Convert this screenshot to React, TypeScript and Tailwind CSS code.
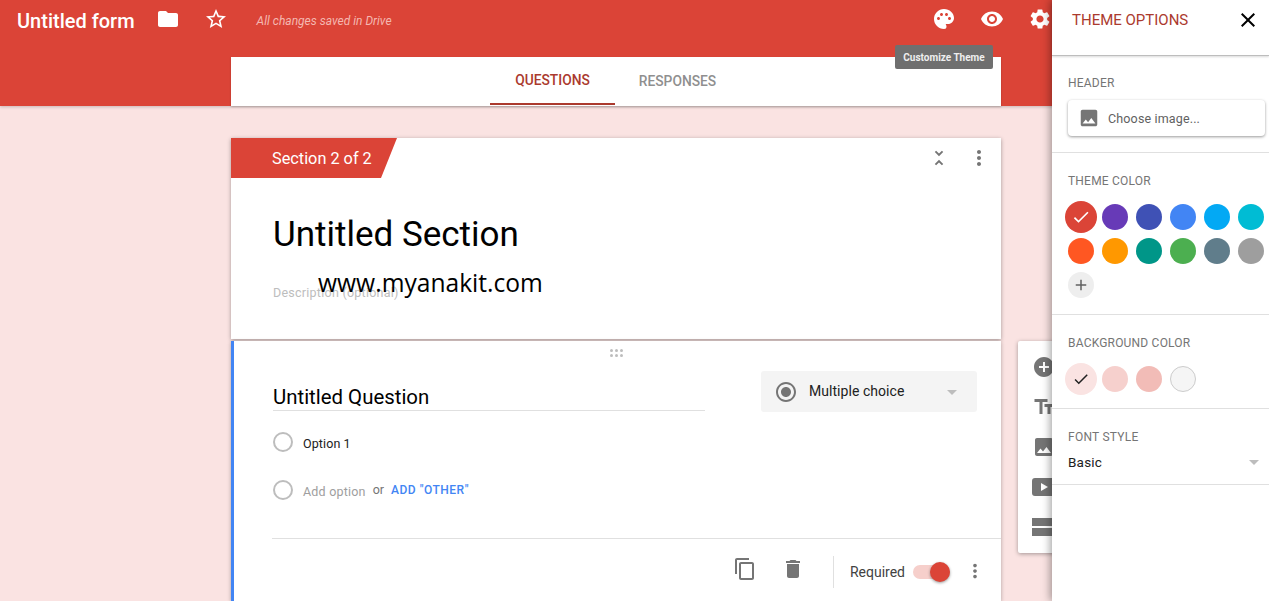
import {
  MdAdd,
  MdAddCircle,
  MdArrowDropDown,
  MdCheck,
  MdClose,
  MdContentCopy,
  MdDelete,
  MdFolder,
  MdImage,
  MdMoreVert,
  MdPalette,
  MdRadioButtonChecked,
  MdSettings,
  MdStarBorder,
  MdTextFields,
  MdUnfoldLess,
  MdVisibility,
} from "react-icons/md";

const themeColors = [
  "bg-[#db4437]",
  "bg-[#673ab7]",
  "bg-[#3f51b5]",
  "bg-[#4285f4]",
  "bg-[#03a9f4]",
  "bg-[#00bcd4]",
  "bg-[#ff5722]",
  "bg-[#ff9800]",
  "bg-[#009688]",
  "bg-[#4caf50]",
  "bg-[#607d8b]",
  "bg-[#9e9e9e]",
];

function ThemeOptions() {
  return (
    <aside className="absolute right-0 top-0 z-20 flex h-[601px] w-[217px] flex-col bg-white shadow-[-2px_0_8px_rgba(0,0,0,0.35)]">
      <div className="flex h-[56px] shrink-0 items-start justify-between border-b border-[#bdbdbd] pl-[20px] pr-[9px] pt-[10px] shadow-[0_1px_2px_rgba(0,0,0,0.15)]">
        <span className="text-[15px] leading-[20px] text-[#ab3a2e]">THEME OPTIONS</span>
        <MdClose className="mt-[-2px] text-[24px] text-black" />
      </div>

      <div className="h-[97px] shrink-0 border-b border-[#e0e0e0] px-[16px] pt-[19px]">
        <div className="text-[12px] leading-[16px] tracking-[0.2px] text-[#757575]">HEADER</div>
        <div className="mt-[9px] flex h-[36px] w-[197px] items-center gap-[8px] rounded-[4px] bg-white pl-[10px] shadow-[0_1px_3px_rgba(0,0,0,0.4)]">
          <MdImage className="text-[22px] text-[#757575]" />
          <span className="mt-[3px] text-[12.5px] tracking-[0.15px] text-[#616161]">Choose image...</span>
        </div>
      </div>

      <div className="h-[162px] shrink-0 border-b border-[#e0e0e0] pl-[16px] pt-[20px]">
        <div className="text-[12px] leading-[16px] tracking-[0.2px] text-[#757575]">THEME COLOR</div>
        <div className="mt-[15px] grid w-[196px] grid-cols-6 gap-x-[8px] gap-y-[8px]">
          {themeColors.map((c, i) => (
            <div key={c} className="relative h-[26px] w-[26px]">
              <div className={`h-[26px] w-[26px] rounded-full ${c}`} />
              {i === 0 && (
                <div className="absolute -left-[3px] -top-[3px] flex h-[32px] w-[32px] items-center justify-center rounded-full bg-[#db4437]">
                  <MdCheck className="text-[20px] text-white" />
                </div>
              )}
            </div>
          ))}
          <div className="flex h-[26px] w-[26px] items-center justify-center rounded-full bg-[#eeeeee]">
            <MdAdd className="text-[18px] text-[#616161]" />
          </div>
        </div>
      </div>

      <div className="h-[94px] shrink-0 border-b border-[#e0e0e0] pl-[16px] pt-[20px]">
        <div className="text-[12px] leading-[16px] tracking-[0.2px] text-[#757575]">BACKGROUND COLOR</div>
        <div className="mt-[15px] flex gap-[8px]">
          <div className="relative h-[26px] w-[26px]">
            <div className="absolute -left-[3px] -top-[3px] flex h-[32px] w-[32px] items-center justify-center rounded-full bg-[#fae3e2]">
              <MdCheck className="text-[18px] text-[#212121]" />
            </div>
          </div>
          <div className="h-[26px] w-[26px] rounded-full bg-[#f6d0cd]" />
          <div className="h-[26px] w-[26px] rounded-full bg-[#f2bcb7]" />
          <div className="h-[26px] w-[26px] rounded-full border border-[#cccccc] bg-[#f5f5f5]" />
        </div>
      </div>

      <div className="h-[76px] shrink-0 border-b border-[#e0e0e0] pl-[16px] pr-[3px] pt-[20px]">
        <div className="text-[12px] leading-[16px] tracking-[0.25px] text-[#757575]">FONT STYLE</div>
        <div className="mt-[5px] flex items-center justify-between">
          <span className="text-[13.5px] leading-[20px] tracking-[0.2px] text-[#212121]">Basic</span>
          <MdArrowDropDown className="text-[24px] text-[#bdbdbd]" />
        </div>
      </div>
    </aside>
  );
}

function Toolbox() {
  return (
    <div className="flex h-[212px] w-[60px] shrink-0 flex-col items-start gap-[16px] rounded-[2px] bg-white pl-[14px] pt-[14px] shadow-[0_1px_4px_rgba(0,0,0,0.35)]">
      <MdAddCircle className="text-[24px] text-[#757575]" />
      <MdTextFields className="text-[24px] text-[#757575]" />
      <MdImage className="text-[24px] text-[#757575]" />
      <svg width="24" height="24" viewBox="0 0 24 24" className="text-[#757575]">
        <path
          fill="currentColor"
          fillRule="evenodd"
          d="M3 3h18a3 3 0 0 1 3 3v12a3 3 0 0 1-3 3H3a3 3 0 0 1-3-3V6a3 3 0 0 1 3-3zm6 5v8l7-4z"
        />
      </svg>
      <svg width="24" height="24" viewBox="0 0 24 24" className="text-[#757575]">
        <path fill="currentColor" d="M0 3h24v8H0zM0 13h24v8H0z" />
      </svg>
    </div>
  );
}

function QuestionCard() {
  return (
    <div className="h-[260px] w-[770px] shrink-0 border-l-[3px] border-[#4285f4] bg-white shadow-[0_1px_4px_rgba(0,0,0,0.3)]">
      <div className="flex justify-center pr-[2px] pt-[8px]">
        <div className="grid grid-cols-3 gap-[2px]">
          {[0, 1, 2, 3, 4, 5].map((d) => (
            <div key={d} className="h-[3px] w-[3px] rounded-full bg-[#bdbdbd]" />
          ))}
        </div>
      </div>

      <div className="flex items-start pl-[39px] pr-[24px] pt-[14px]">
        <div className="mt-[14px] w-[432px] border-b border-[#e0e0e0] pb-[1px] text-[20.4px] leading-[24px] text-black">
          Untitled Question
        </div>
        <div className="ml-auto flex h-[41px] w-[216px] items-center rounded-[3px] bg-[#f4f4f4] pl-[13px] pr-[13px]">
          <MdRadioButtonChecked className="text-[24px] text-[#757575]" />
          <span className="ml-[11px] text-[14px] tracking-[0.05px] text-[#212121]">Multiple choice</span>
          <MdArrowDropDown className="ml-auto text-[24px] text-[#bdbdbd]" />
        </div>
      </div>

      <div className="mt-[6px] flex h-[48px] items-center pl-[39px]">
        <div className="h-[20px] w-[20px] rounded-full border-2 border-[#bdbdbd]" />
        <span className="ml-[10px] mt-[4px] text-[12.5px] tracking-[0.1px] text-[#212121]">Option 1</span>
      </div>
      <div className="flex h-[47px] items-center pl-[39px]">
        <div className="h-[20px] w-[20px] rounded-full border-2 border-[#bdbdbd]" />
        <span className="ml-[10px] mt-[5px] text-[12.5px] tracking-[0.2px] text-[#9e9e9e]">Add option</span>
        <span className="ml-[7px] mt-[1px] text-[12.5px] text-[#757575]">or</span>
        <span className="ml-[7px] mt-[1px] text-[12px] font-medium tracking-[0.5px] text-[#4285f4]">ADD "OTHER"</span>
      </div>

      <div className="ml-[38px] mt-[25px] flex h-[62px] items-center border-t border-[#e0e0e0] pr-[15px]">
        <MdContentCopy className="ml-auto mt-[-2px] text-[24px] text-[#757575]" />
        <MdDelete className="ml-[24px] mt-[-2px] text-[24px] text-[#757575]" />
        <div className="ml-[28px] mt-[4px] h-[32px] w-px bg-[#e0e0e0]" />
        <span className="ml-[16px] mt-[6px] text-[14px] text-[#424242]">Required</span>
        <div className="relative ml-[8px] mt-[5px] h-[14px] w-[37px] rounded-full bg-[#f6cfcb]">
          <div className="absolute -top-[3px] right-0 h-[20px] w-[20px] rounded-full bg-[#db4437] shadow-[0_1px_3px_rgba(0,0,0,0.4)]" />
        </div>
        <MdMoreVert className="ml-[14px] mt-[2px] text-[22px] text-[#757575]" />
      </div>
    </div>
  );
}

export default function App() {
  return (
    <div className="relative h-[601px] w-[1269px] overflow-hidden bg-[#fae3e2] font-['Roboto',sans-serif]">
      {/* header */}
      <header className="h-[106px] bg-[#db4437] shadow-[0_1px_3px_rgba(0,0,0,0.2)]">
        <div className="flex h-[57px] items-start pl-[17px]">
          <span className="mt-[7px] text-[20px] font-medium leading-[28px] text-white">Untitled form</span>
          <MdFolder className="ml-[21px] mt-[7px] text-[24px] text-white" />
          <MdStarBorder className="ml-[24px] mt-[7px] text-[24px] text-white" />
          <span className="ml-[29px] mt-[13px] text-[12px] italic leading-[16px] text-[#f4b8b1]">
            All changes saved in Drive
          </span>
          <MdPalette className="ml-[540px] mt-[7px] text-[24px] text-white" />
          <MdVisibility className="ml-[24px] mt-[7px] text-[24px] text-white" />
          <MdSettings className="ml-[24px] mt-[7px] text-[24px] text-white" />
        </div>
        <nav className="ml-[231px] flex h-[49px] w-[770px] justify-center bg-white pr-[2px] shadow-[0_1px_2px_rgba(0,0,0,0.2)]">
          <div className="flex h-[48px] w-[125px] items-center justify-center border-b-2 border-[#ab3a2e] text-[13.8px] font-medium text-[#ab3a2e]">
            QUESTIONS
          </div>
          <div className="flex h-[48px] w-[125px] items-center justify-center text-[13.8px] font-medium text-[#8f8f8f]">
            RESPONSES
          </div>
        </nav>
      </header>

      {/* tooltip */}
      <div className="absolute left-[895px] top-[45px] z-10 flex h-[24px] w-[98px] items-center justify-center rounded-[2px] bg-[#6f6f6f] text-[10px] font-bold text-[#eeeeee]">
        Customize Theme
      </div>

      {/* section card */}
      <main className="ml-[231px] mt-[32px]">
        <section className="h-[201px] w-[770px] bg-white shadow-[0_1px_4px_rgba(0,0,0,0.35)]">
          <div className="flex items-start justify-between pr-[10px]">
            <div className="flex h-[40px] w-[166px] items-center bg-[#db4437] pl-[41px] pt-[2px] text-[16.3px] text-white [clip-path:polygon(0_0,100%_0,150px_100%,0_100%)]">
              Section 2 of 2
            </div>
            <div className="mt-[8px] flex items-center gap-[17px]">
              <MdUnfoldLess className="text-[22px] text-[#757575]" />
              <MdMoreVert className="text-[24px] text-[#757575]" />
            </div>
          </div>
          <h1 className="ml-[42px] mt-[36px] text-[35px] font-normal leading-[42px] text-black">Untitled Section</h1>
          <p className="ml-[42px] mt-[28px] text-[12.5px] leading-[18px] tracking-[0.25px] text-[#bdbdbd]">
            Description (optional)
          </p>
        </section>

        <div className="mt-[2px] flex gap-[17px]">
          <QuestionCard />
          <Toolbox />
        </div>
      </main>

      {/* watermark */}
      <div className="absolute left-[318px] top-[266px] z-10 font-['Open_Sans',sans-serif] text-[24.6px] leading-[33px] text-black">
        www.myanakit.com
      </div>

      <ThemeOptions />
    </div>
  );
}
